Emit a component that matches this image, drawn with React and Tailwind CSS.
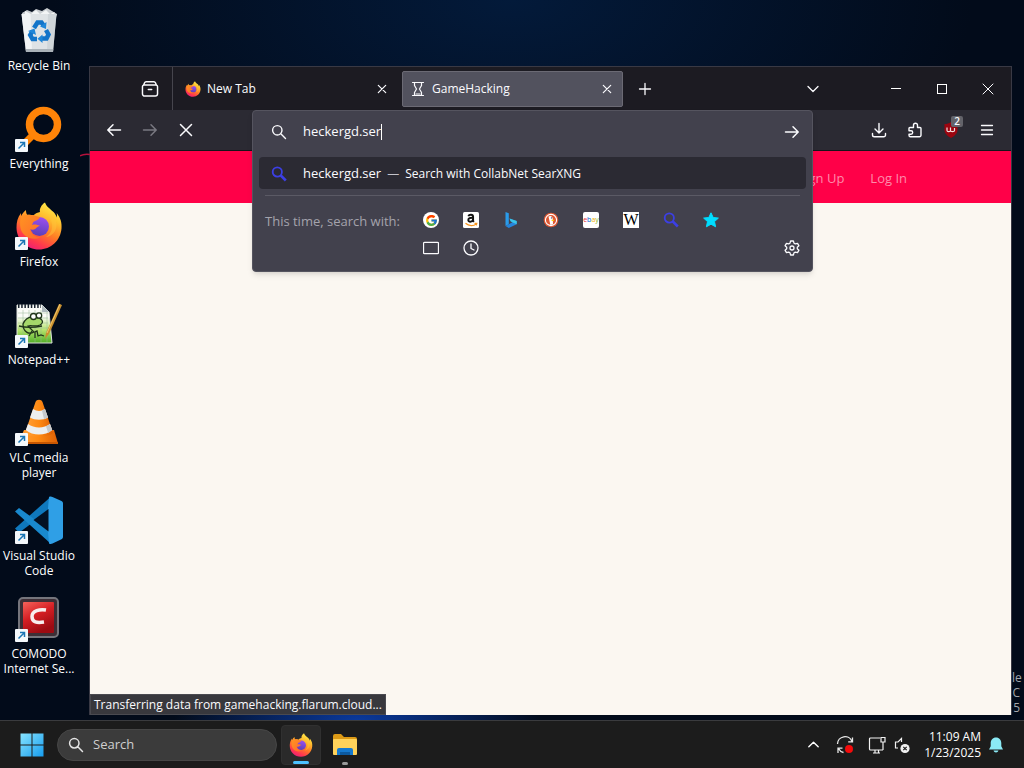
import React from "react";
import { FcGoogle } from "react-icons/fc";

function FirefoxLogo({ className }) {
  return (
    <svg viewBox="0 0 48 48" className={className} aria-hidden="true">
      <defs>
        <linearGradient id="fx-body" x1="0.8" y1="0" x2="0.3" y2="1">
          <stop offset="0" stopColor="#fff14f" />
          <stop offset="0.3" stopColor="#ffc02f" />
          <stop offset="0.58" stopColor="#ff7b25" />
          <stop offset="0.82" stopColor="#ff3a4c" />
          <stop offset="1" stopColor="#ec1c78" />
        </linearGradient>
        <linearGradient id="fx-globe" x1="0.6" y1="0" x2="0.4" y2="1">
          <stop offset="0" stopColor="#9b50f0" />
          <stop offset="1" stopColor="#5a3fb8" />
        </linearGradient>
        <linearGradient id="fx-tail" x1="0" y1="0" x2="1" y2="1">
          <stop offset="0" stopColor="#ff9422" />
          <stop offset="1" stopColor="#ff6a2b" />
        </linearGradient>
      </defs>
      <path
        d="M30 .5c1.500 4.500 5.500 6.500 8.500 9.500 1.600 1.700 2.700 3.600 3.400 5.500.3-1.500.2-3-.2-4.500 4 5 5.300 10 4.800 15.500C45.500 38.500 36 47.500 24 47.500 11.500 47.500 1.500 37.800 1.500 25.500c0-5 1-10 4.500-14.500 0 0 0 2 .3 3 1-2.500 2.700-4.300 4.700-6 0 1.700.2 3.600 1.200 4.800 2.300-.3 4.500-.1 6.300.5 2-1.800 4.300-3 6.500-3.300-.8-3 1.500-7.500 5-9.500z"
        fill="url(#fx-body)"
      />
      <circle cx="24.500" cy="24.500" r="9.500" fill="url(#fx-globe)" />
      <path
        d="M6 15c3-2.300 8-2.800 12.500-1.700C21 14 23 15 25 15c-1 2.500-4 3.700-6 4.500-1 .5-1.200 2.300-2.200 3.500 2.700-.9 5.700-.4 8.200 1-2 .2-3.200 1.600-4.500 2.700-1.700 1.300-4.200 1.200-5.500.3 1 5.500 6 9 11 8-9 5-19-1-20.500-9-.6-3.500-.6-7.300.5-11z"
        fill="url(#fx-tail)"
      />
      <path d="M28 11c6 2 10 8 9 15-.5 4-3 7-6 9 7-1 11-7 10.500-13C41 16 35 12 28 11z" fill="#ffc43a" opacity=".5" />
    </svg>
  );
}

function RecycleBin() {
  return (
    <svg viewBox="0 0 48 48" className="size-12" aria-hidden="true">
      <path d="M7 7l5-3 5 2 4-3 6 2 5-3 5 3 5 3-2 6H8z" fill="#c8ccd0" />
      <path d="M10 5l6 3 5-4 4 4 6-4 4 4 5-2-3 6H10z" fill="#f3f5f6" />
      <path d="M6.500 8h35L38 46H11z" fill="#dfe3e6" />
      <path d="M6.500 8h9L17 46h-6z" fill="#f6f8f9" opacity=".8" />
      <path d="M33 8h8.500L38 46h-6z" fill="#c7cdd2" opacity=".6" />
      <path d="M11 43h27.300l-.3 3H11z" fill="#aab2b8" />
      <g fill="none" stroke="#1274c9" strokeWidth="4.500">
        <path d="M19 22l3.500-5.500h4L29 20" />
        <path d="M31 24l2.500 4.500-2 4H26" />
        <path d="M22 33h-4.500l-2.300-4L17.500 25" />
      </g>
      <path d="M31.500 16l-.5 7-6-2.500zM27.500 28.500V37l-5-4.200zM13 25l6.500-2.500 1.500 6.500z" fill="#1f86d8" />
    </svg>
  );
}

function EverythingIcon() {
  return (
    <svg viewBox="0 0 48 48" className="size-12" aria-hidden="true">
      <path d="M18 31L6 43" stroke="#ff8200" strokeWidth="7" />
      <circle cx="28.500" cy="20.500" r="14" fill="none" stroke="#ff8408" strokeWidth="7.500" />
    </svg>
  );
}

function NotepadIcon() {
  return (
    <svg viewBox="0 0 48 48" className="size-12" aria-hidden="true">
      <defs>
        <linearGradient id="npp" x1="0" y1="0" x2="0" y2="1">
          <stop offset="0.3" stopColor="#fbfcf8" />
          <stop offset="0.65" stopColor="#b7e56f" />
          <stop offset="1" stopColor="#4fae26" />
        </linearGradient>
      </defs>
      <path d="M2 5h25l7 7 3 31H2z" fill="url(#npp)" stroke="#dfe3dd" />
      <path d="M3 6h23" stroke="#16202c" strokeWidth="4" strokeDasharray="1.500 1.700" />
      <path d="M3 13h30M3 18h30M3 23h30M3 28h31M8 10v32M14 10v32M20 10v32M26 10v32M32 12v30" stroke="#94b694" strokeWidth=".5" />
      <path d="M27 5v7h7z" fill="#aeb9bd" />
      <g fill="#a5d86a" stroke="#20351a" strokeWidth="1.300">
        <path d="M8 24c2-5 6-8 12-7 7 1 10 5 5 8-5 2-9 0-12 1l6 6c-5 3-11 0-11-8z" />
        <circle cx="18.500" cy="16.500" r="3" fill="#fff" />
        <circle cx="24" cy="15.500" r="2.700" fill="#fff" />
      </g>
      <path d="M4 26c8 2 14 2 23 0M14 36l3-5M20 38v-6l2-1 1 5 3-1 3 1" fill="none" stroke="#20351a" strokeWidth="1.300" />
      <path d="M44 4l3 1-13 29-4 5 1-6z" fill="#c9902f" />
      <path d="M45 4L32 33" stroke="#f0c66b" />
    </svg>
  );
}

function VlcIcon() {
  return (
    <svg viewBox="0 0 48 48" className="size-12" aria-hidden="true">
      <defs>
        <linearGradient id="vlc" x1="0" x2="1">
          <stop offset="0" stopColor="#ffa03a" />
          <stop offset="0.5" stopColor="#ff8a12" />
          <stop offset="1" stopColor="#dd5f04" />
        </linearGradient>
      </defs>
      <path d="M9 32h30l4 13.500H3z" fill="url(#vlc)" />
      <path d="M3 44h40v2H3z" fill="#c75702" />
      <path d="M20.500 4c1-3 6-3 7 0L38 35c-5 5-23 5-28 0z" fill="url(#vlc)" />
      <path d="M18 11c4 2.500 8 2.500 12 0l3 8.500c-5 3-13 3-18 0z" fill="#eceeef" />
      <path d="M13 26c6 4.500 16 4.500 22 0l2.200 6c-7 6-19.500 6-26.400 0z" fill="#eceeef" />
      <path d="M27 12.500l3-1.500 3 8.500-4 1.800zM31 28.300l4-2.300 2.200 6-4 3z" fill="#c5c9cc" />
    </svg>
  );
}

function CodeIcon() {
  return (
    <svg viewBox="0 0 48 48" className="size-12" aria-hidden="true">
      <path d="M35 1.500L0 32.500l4 4.300L37 12z" fill="#0f78bd" />
      <path d="M0 15.500l4-3.500 33 24-2 11z" fill="#1989ce" />
      <path d="M34 1l-1 11v24l1 11.500c1.500.8 2.500.5 3.500 0l9-4.200c1-.6 1.500-1.500 1.500-2.500V7.500c0-1-.5-2-1.500-2.500l-9-4C36.500.6 35.500.3 34 1z" fill="#2f9fe6" />
      <path d="M33.500 13v22.500L18.500 24z" fill="#031124" />
    </svg>
  );
}

function ComodoIcon() {
  return (
    <svg viewBox="0 0 48 48" className="size-12" aria-hidden="true">
      <defs>
        <linearGradient id="cmd" x1="0" y1="0" x2="0.500" y2="1">
          <stop offset="0" stopColor="#f5635b" />
          <stop offset="0.5" stopColor="#d51f24" />
          <stop offset="1" stopColor="#9c0b12" />
        </linearGradient>
      </defs>
      <rect x="4" y="4" width="39" height="39" rx="4" fill="#3d2f36" stroke="#75757c" strokeWidth="2" />
      <rect x="8" y="8" width="31" height="31" rx="1" fill="url(#cmd)" />
      <path d="M31 16c-6-1-14 .5-14 6.500s5 6.500 12 5.500" fill="none" stroke="#f7eeee" strokeWidth="3.500" />
    </svg>
  );
}

const shortcuts = [
  { name: "Recycle Bin", Icon: RecycleBin, linked: false },
  { name: "Everything", Icon: EverythingIcon, linked: true },
  { name: "Firefox", Icon: () => <FirefoxLogo className="size-12" />, linked: true },
  { name: "Notepad++", Icon: NotepadIcon, linked: true },
  { name: "VLC media player", Icon: VlcIcon, linked: true },
  { name: "Visual Studio Code", Icon: CodeIcon, linked: true },
  { name: "COMODO Internet Se...", Icon: ComodoIcon, linked: true },
];

function Shortcut({ name, Icon, linked }) {
  return (
    <li className="h-[98px]">
      <button type="button" className="flex w-full flex-col items-center pt-[6px] text-center text-xs leading-[15px] text-white">
        <span className="relative block">
          <Icon />
          {linked && (
            <svg viewBox="0 0 13 13" className="absolute bottom-0 left-0 size-[13px]" aria-hidden="true">
              <rect width="13" height="13" rx="1" fill="#f4f8fb" />
              <path d="M3.500 9.500l5.500-5.500M5 3.500h4.500V8" fill="none" stroke="#1b76b5" strokeWidth="1.500" />
            </svg>
          )}
        </span>
        <span className="mt-1">{name}</span>
      </button>
    </li>
  );
}

function Stroke({ d, size = "size-4", width = 1.5, className = "" }) {
  return (
    <svg viewBox="0 0 16 16" className={`${size} ${className}`} fill="none" stroke="currentColor" strokeWidth={width} strokeLinecap="round" strokeLinejoin="round" aria-hidden="true">
      <path d={d} />
    </svg>
  );
}

const paths = {
  close: "M4.300 4.300l7.400 7.400M11.700 4.300l-7.400 7.400",
  stop: "M2.500 2.500l11 11M13.500 2.500l-11 11",
  plus: "M8 2.500v11M2.500 8h11",
  down: "M3 5.500l5 5 5-5",
  up: "M3 10.500l5-5 5 5",
  back: "M14.500 8H2M7 2.800L1.800 8 7 13.200",
  forward: "M1.500 8H14M9 2.800L14.200 8 9 13.200",
  search: "M11 6.300a4.700 4.700 0 1 1-9.400 0 4.700 4.700 0 0 1 9.400 0zM9.800 9.800l4.700 4.700",
  menu: "M2.500 3.500h11M2.500 8h11M2.500 12.500h11",
  download: "M8 1.500v9M4 7l4 4 4-4M1.500 11.500v1.500a1.800 1.800 0 0 0 1.800 1.800h9.400a1.800 1.800 0 0 0 1.800-1.800v-1.500",
  puzzle: "M3.500 14.800h9a1.500 1.500 0 0 0 1.500-1.500V6.500a1 1 0 0 0-1-1h-2.500V3.200a2 2 0 0 0-4 0v2.300H3a1 1 0 0 0-1 1v2.300h2a1.700 1.700 0 0 1 0 3.400H2v1.100a1.500 1.500 0 0 0 1.500 1.500z",
  view: "M2.800 4.500h10.400a1.500 1.500 0 0 1 1.500 1.500v6.300a2 2 0 0 1-2 2H3.300a2 2 0 0 1-2-2V6a1.500 1.500 0 0 1 1.500-1.500zM2.300 4.500l.9-2a1.500 1.500 0 0 1 1.300-.9h7a1.500 1.500 0 0 1 1.300.9l.9 2M6.500 8.500h3",
  hourglass: "M2.500 1.500h11M2.500 14.500h11M4.500 1.500v3l2 3.500-2 3.500v3M11.500 1.500v3l-2 3.500 2 3.500v3M6 13h4",
  clock: "M15 8A7 7 0 1 1 1 8a7 7 0 0 1 14 0zM8 4v4.500l3 1.500",
  tab: "M1.500 2.300h13a1 1 0 0 1 1 1v9.400a1 1 0 0 1-1 1h-13a1 1 0 0 1-1-1V3.300a1 1 0 0 1 1-1z",
  gear: "M6.600 1h2.800l.6 2.200 1.300.7 2.200-.6 1.400 2.400L13.300 7.300v1.400l1.600 1.600-1.400 2.400-2.200-.6-1.300.7L9.400 15H6.600L6 12.800l-1.300-.7-2.200.6-1.400-2.400 1.600-1.600V7.300L1.100 5.700l1.400-2.400 2.200.6L6 3.200zM10 8a2 2 0 1 1-4 0 2 2 0 0 1 4 0z",
};

function BlueSearch() {
  return (
    <svg viewBox="0 0 16 16" className="size-4" fill="none" stroke="#3c3fe4" aria-hidden="true">
      <circle cx="6.300" cy="6" r="4.600" strokeWidth="1.800" />
      <path d="M9.800 9.500l5 5" strokeWidth="2.600" />
    </svg>
  );
}

const engines = [
  {
    name: "Google",
    mark: (
      <span className="flex size-4 items-center justify-center rounded-full bg-white">
        <FcGoogle className="size-[13px]" />
      </span>
    ),
  },
  {
    name: "Amazon",
    mark: (
      <svg viewBox="0 0 16 16" className="size-4" aria-hidden="true">
        <rect width="16" height="16" rx="1.500" fill="#fff" />
        <path d="M5.300 4.300c.8-2.200 4.800-2.200 4.800.4v4.200l.8.9M10 5.800c-3-.2-4.700.5-4.700 2.300 0 2.200 3.700 2.200 4.700-.3" fill="none" stroke="#111" strokeWidth="1.900" />
        <path d="M2.500 11.300c3.500 3 8 3 10.800.6M11.500 11.300h2.300l-.5 2" fill="none" stroke="#f7941d" strokeWidth="1.200" />
      </svg>
    ),
  },
  {
    name: "Bing",
    mark: (
      <svg viewBox="0 0 16 16" className="size-4" aria-hidden="true">
        <path d="M2.500 0l3.300 1.200v11L2.500 14z" fill="#2a9bea" />
        <path d="M5.800 12.200l3.600-2-1.800-.9-1.100-2.800 7.200 2.600v3.200L5.800 16l-3.300-2z" fill="#2585dc" />
        <path d="M6.500 6.500l7.200 2.600v3.200L9.400 10.200l-1.800-.9z" fill="#3cc6e8" />
      </svg>
    ),
  },
  {
    name: "DuckDuckGo",
    mark: (
      <svg viewBox="0 0 16 16" className="size-4" aria-hidden="true">
        <circle cx="8" cy="8" r="7.300" fill="#de5833" />
        <circle cx="8" cy="8" r="5.600" fill="#de5833" stroke="#fff" strokeWidth="1.100" />
        <path d="M5.500 4.500c2.200-1.500 4.500.2 4.300 3.200l.2 4.500-2.600.8z" fill="#fff" />
        <path d="M8.600 7.800h3l-1.200 1.300H8.600z" fill="#fdd20a" />
        <circle cx="8.400" cy="5.900" r=".6" fill="#24436b" />
      </svg>
    ),
  },
  {
    name: "eBay",
    mark: (
      <span className="flex size-4 items-center justify-center rounded-xs bg-white text-[7px] leading-4">
        <span className="text-[#e53238]">e</span>
        <span className="text-[#0064d2]">b</span>
        <span className="text-[#f5af02]">a</span>
        <span className="text-[#86b817]">y</span>
      </span>
    ),
  },
  {
    name: "Wikipedia",
    mark: (
      <span className="flex size-4 items-center justify-center bg-white font-['Liberation_Serif',serif] text-base leading-4 text-black">W</span>
    ),
  },
  { name: "CollabNet SearXNG", mark: <BlueSearch /> },
  {
    name: "Bookmarks",
    mark: (
      <svg viewBox="0 0 16 16" className="size-4" aria-hidden="true">
        <path d="M8 .8l2.200 4.700 5.200.6-3.900 3.500 1.100 5.200L8 12.200l-4.600 2.600 1.100-5.200L.6 6.100l5.200-.6z" fill="#00ddff" stroke="#00ddff" strokeLinejoin="round" />
      </svg>
    ),
  },
  { name: "Tabs", mark: <Stroke d={paths.tab} width={1.3} /> },
  { name: "History", mark: <Stroke d={paths.clock} width={1.3} /> },
];

function IconButton({ label, className = "", children }) {
  return (
    <button type="button" aria-label={label} className={`flex h-7 shrink-0 items-center justify-center ${className}`}>
      {children}
    </button>
  );
}

function TabBar() {
  return (
    <div className="flex h-[43px] items-center bg-[#1c1b22]">
      <div className="flex h-full w-[83px] shrink-0 items-center justify-end border-r border-[#46454d] pr-1">
        <IconButton label="Firefox View" className="w-9">
          <Stroke d={paths.view} size="size-[18px]" width={1.3} />
        </IconButton>
      </div>
      <div role="tablist" className="flex h-9 text-xs">
        <div className="flex w-[225px] items-center pr-1 pl-3">
          <FirefoxLogo className="size-4 shrink-0" />
          <button type="button" role="tab" aria-selected="false" className="ml-[6px] flex-1 text-left">New Tab</button>
          <IconButton label="Close New Tab" className="w-6">
            <Stroke d={paths.close} width={1.2} />
          </IconButton>
        </div>
        <div className="ml-1 flex w-[221px] items-center rounded-xs border border-[#6b6a74] bg-[#52525e] pr-[3px] pl-[7px]">
          <Stroke d={paths.hourglass} width={1.2} className="shrink-0" />
          <button type="button" role="tab" aria-selected="true" className="ml-[6px] flex-1 text-left">GameHacking</button>
          <IconButton label="Close GameHacking" className="w-6">
            <Stroke d={paths.close} width={1.2} />
          </IconButton>
        </div>
      </div>
      <IconButton label="Open a new tab" className="ml-1 w-9">
        <Stroke d={paths.plus} width={1.3} />
      </IconButton>
      <div className="ml-auto flex items-center">
        <IconButton label="List all tabs" className="mr-[42px] w-9">
          <Stroke d={paths.down} width={1.3} />
        </IconButton>
        <IconButton label="Minimize" className="w-[46px]">
          <span className="h-px w-[10px] bg-white" />
        </IconButton>
        <IconButton label="Maximize" className="w-[46px]">
          <span className="size-[10px] border border-white" />
        </IconButton>
        <IconButton label="Close window" className="w-[46px]">
          <Stroke d="M3 3l10 10M13 3L3 13" width={1} />
        </IconButton>
      </div>
    </div>
  );
}

function UrlPopup() {
  return (
    <div className="absolute inset-x-0 top-0 z-10 rounded-sm border border-[#55545f] bg-[#42414d] pb-[9px] shadow-md">
      <div className="flex h-[41px] items-center pr-[2px] pl-[18px]">
        <Stroke d={paths.search} width={1.4} className="shrink-0" />
        <input type="text" aria-label="Search or enter address" defaultValue="heckergd.ser" className="ml-4 field-sizing-content bg-transparent text-[13px] outline-none" />
        <span className="h-4 w-px bg-white" />
        <IconButton label="Go" className="ml-auto w-9">
          <Stroke d={paths.forward} />
        </IconButton>
      </div>
      <button type="button" className="mx-[6px] mt-[5px] flex h-8 w-[calc(100%-12px)] items-center rounded-sm bg-[#2b2a33] pt-[2px] pl-3 text-left">
        <BlueSearch />
        <span className="ml-4 text-[13px]">heckergd.ser</span>
        <span className="mx-[6px] text-xs text-[#c4c3ca]">—</span>
        <span className="text-xs">Search with CollabNet SearXNG</span>
      </button>
      <div className="mx-3 mt-[6px] border-t border-[#5b5a65]" />
      <div className="flex pt-[10px] pr-[2px] pl-3">
        <span className="w-[146px] shrink-0 text-[13px] leading-[30px] whitespace-nowrap text-[#a4a3ac]">This time, search with:</span>
        <div className="grid grid-cols-[repeat(8,40px)] grid-rows-[28px_28px]">
          {engines.map((e) => (
            <button key={e.name} type="button" aria-label={e.name} className="flex items-center justify-center">
              {e.mark}
            </button>
          ))}
        </div>
        <IconButton label="Search settings" className="ml-auto w-9 self-end">
          <Stroke d={paths.gear} width={1.3} />
        </IconButton>
      </div>
    </div>
  );
}

function Toolbar() {
  return (
    <div className="flex h-[41px] items-center border-b border-[#15141a] bg-[#2b2a33]">
      <div className="flex w-[162px] shrink-0 pl-[6px]">
        <IconButton label="Back" className="w-9"><Stroke d={paths.back} /></IconButton>
        <IconButton label="Forward" className="w-9 text-[#7a7982]"><Stroke d={paths.forward} /></IconButton>
        <IconButton label="Stop" className="w-9"><Stroke d={paths.stop} /></IconButton>
      </div>
      <div className="relative flex-1 self-stretch">
        <UrlPopup />
      </div>
      <div className="flex w-[198px] shrink-0 justify-end pr-[6px]">
        <IconButton label="Downloads" className="w-9"><Stroke d={paths.download} width={1.4} /></IconButton>
        <IconButton label="Extensions" className="w-9"><Stroke d={paths.puzzle} width={1.4} /></IconButton>
        <IconButton label="uBlock" className="relative w-9">
          <svg viewBox="0 0 16 16" className="size-4" aria-hidden="true">
            <path d="M8 0c2 1.500 4 2 6.500 2v6c0 3.500-3 6-6.500 8-3.500-2-6.500-4.500-6.500-8V2C4 2 6 1.500 8 0z" fill="#9b0510" />
            <path d="M4 5.500v3c0 1.500 3.500 1.500 3.500 0v-3m0 3c0 1.500 4 1.500 4 0V6" fill="none" stroke="#f3dede" strokeWidth="1.200" />
          </svg>
          <span className="absolute top-0 right-[6px] rounded-xs bg-[#63636a] px-[3px] text-[10px] leading-[11px] font-semibold">2</span>
        </IconButton>
        <IconButton label="Menu" className="w-9"><Stroke d={paths.menu} width={1.3} /></IconButton>
      </div>
    </div>
  );
}

function BrowserWindow() {
  return (
    <section aria-label="Firefox" className="relative mt-[66px] mb-[5px] ml-[11px] flex min-w-0 flex-1 flex-col border border-b-0 border-[#393944] bg-[#fbf7f1] text-[#fbfbfe]">
      <TabBar />
      <Toolbar />
      <nav className="flex h-[52px] items-center justify-end gap-[26px] bg-[#ff0048] pt-[3px] pr-[104px] text-[13px] text-[#ff8aab]">
        <a href="#signup">Sign Up</a>
        <a href="#login">Log In</a>
      </nav>
      <main className="flex-1" />
      <p className="absolute bottom-0 left-0 border border-[#4a4a50] bg-[#38383d] px-[3px] text-xs leading-[19px]">
        Transferring data from gamehacking.flarum.cloud...
      </p>
      <svg viewBox="0 0 10 4" className="absolute top-[86px] -left-[10px] h-1 w-[10px]" aria-hidden="true">
        <path d="M0 3c3-2 6-2 10-1.500" fill="none" stroke="#b5123c" strokeWidth="1.500" />
      </svg>
    </section>
  );
}

function ExplorerIcon() {
  return (
    <svg viewBox="0 0 26 24" className="h-6 w-[26px]" aria-hidden="true">
      <path d="M1 3a2 2 0 0 1 2-2h6l3 3h11a2 2 0 0 1 2 2v4H1z" fill="#dc9a16" />
      <rect x="1" y="6" width="24" height="16" rx="1" fill="#ffd25a" />
      <path d="M5 22v-5a2 2 0 0 1 2-2h12a2 2 0 0 1 2 2v5z" fill="#1579cf" />
      <path d="M8 22v-3h10v3z" fill="#0c599f" />
    </svg>
  );
}

function Taskbar() {
  return (
    <footer className="flex h-12 shrink-0 items-center border-t border-[#3a3b3e] bg-[#1c1c1c] pr-[20px] pl-[13px] text-white">
      <button type="button" aria-label="Start" className="flex h-10 w-[38px] items-center justify-center">
        <svg viewBox="0 0 24 24" className="size-6" aria-hidden="true">
          <defs>
            <linearGradient id="win" x1="0" y1="0" x2="24" y2="24" gradientUnits="userSpaceOnUse">
              <stop offset="0" stopColor="#8ae5ff" />
              <stop offset="1" stopColor="#149bee" />
            </linearGradient>
          </defs>
          <path d="M0.500 0.500h11v11h-11zM12.500 .5h11v11h-11zM.5 12.500h11v11h-11zM12.500 12.500h11v11h-11z" fill="url(#win)" />
        </svg>
      </button>
      <div className="ml-[6px] flex h-8 w-[220px] items-center rounded-full border border-[#464646] bg-[#3b3b3b] px-[10px]">
        <Stroke d={paths.search} className="shrink-0 text-[#e4e4e4]" />
        <input type="search" aria-label="Search" placeholder="Search" className="ml-[9px] w-full min-w-0 bg-transparent text-[13px] outline-none placeholder:text-[#cfcfcf]" />
      </div>
      <button type="button" aria-label="Firefox" className="relative ml-1 flex size-10 items-center justify-center rounded-sm border border-[#303030] bg-[#2a2a2a]">
        <FirefoxLogo className="size-6" />
        <span className="absolute bottom-0 h-[3px] w-4 rounded-full bg-[#4cc2ff]" />
      </button>
      <button type="button" aria-label="File Explorer" className="relative ml-1 flex size-10 items-center justify-center">
        <ExplorerIcon />
        <span className="absolute bottom-0 h-[3px] w-[6px] rounded-full bg-[#9a9a9a]" />
      </button>
      <div className="ml-auto flex items-center">
        <IconButton label="Show hidden icons" className="w-8"><Stroke d={paths.up} size="size-[15px]" /></IconButton>
        <IconButton label="Windows Update" className="w-8">
          <svg viewBox="0 0 18 18" className="size-[18px]" fill="none" stroke="#e8e8e8" strokeWidth="1.300" aria-hidden="true">
            <path d="M1.500 8A7.500 7.500 0 0 1 16 5.500M16.500 1.500v4.300h-4.300M2 17v-4.800h4.500M2.500 12.500c1 2 3 3.500 5 4" />
            <circle cx="13" cy="13" r="4" fill="#f40b0b" stroke="none" />
          </svg>
        </IconButton>
        <IconButton label="Network" className="w-8">
          <svg viewBox="0 0 18 18" className="size-[18px]" fill="none" stroke="#f2f2f2" strokeWidth="1.200" aria-hidden="true">
            <path d="M12 2H2.500a1 1 0 0 0-1 1v10a1 1 0 0 0 1 1H15M5 17h7M7 14v3M10.500 14v3M13 1.500h4v4.500h-4zM15 6v8" />
          </svg>
        </IconButton>
        <IconButton label="Volume muted" className="w-[18px]">
          <svg viewBox="0 0 18 18" className="size-[18px]" fill="none" stroke="#f2f2f2" strokeWidth="1.200" aria-hidden="true">
            <path d="M8.500 6V2.500L5 6H2.500v6H5" />
            <circle cx="12" cy="12.500" r="4.600" fill="#f2f2f2" stroke="none" />
            <path d="M10.300 10.800l3.400 3.400M13.700 10.800l-3.400 3.400" stroke="#1c1c1c" />
          </svg>
        </IconButton>
        <time className="ml-2 w-[62px] text-right text-xs leading-4 whitespace-nowrap">
          11:09 AM
          <br />
          1/23/2025
        </time>
        <IconButton label="Notifications" className="ml-[7px] w-4">
          <svg viewBox="0 0 16 18" className="h-[18px] w-4 shrink-0" fill="#8beaf5" aria-hidden="true">
            <path d="M8 1.500c3.300 0 5.300 2.500 5.300 5.500v3.200l1.700 3.300H1l1.700-3.300V7C2.700 4 4.700 1.500 8 1.500zM5.500 14.500h5c-.4 1.300-1.300 2-2.500 2s-2.100-.7-2.500-2z" />
          </svg>
        </IconButton>
      </div>
    </footer>
  );
}

export default function App() {
  return (
    <div className="flex min-h-screen flex-col bg-[#020b1a] bg-[radial-gradient(ellipse_45%_30%_at_50%_0%,#031a3a,transparent),radial-gradient(ellipse_18%_8%_at_35%_94%,#0a3aa0,transparent)] font-['Open_Sans','Noto_Sans',sans-serif]">
      <div className="flex flex-1">
        <ul className="w-[78px] shrink-0">
          {shortcuts.map((s) => (
            <Shortcut key={s.name} {...s} />
          ))}
        </ul>
        <BrowserWindow />
        <div className="flex w-3 shrink-0 flex-col justify-end pr-1 pb-[5px] text-right text-xs leading-[15px] text-[#a3a7ad]">
          <span>le</span>
          <span>C</span>
          <span>5</span>
        </div>
      </div>
      <Taskbar />
    </div>
  );
}
